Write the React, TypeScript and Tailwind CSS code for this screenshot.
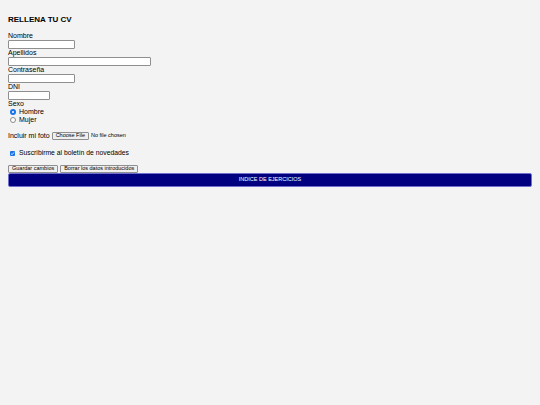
export default function App() {
  const inputCls =
    'block h-[9px] bg-white border border-[#8f8f8f] rounded-[1px] outline-none';
  const btnCls =
    'h-[8px] rounded-[1px] border border-[#8f8f8f] bg-[#efefef] px-[3px] text-[5.5px] leading-none';

  return (
    <div className="min-h-screen bg-[#f3f3f3] px-[8px] pt-[15px] font-['Liberation_Sans',Arial,sans-serif] text-black">
      <h1 className="text-[8px] leading-[10px] font-bold">RELLENA TU CV</h1>

      <form className="mt-[7px] text-[7px] leading-[8px]" onSubmit={(e) => e.preventDefault()}>
        <label className="block">Nombre</label>
        <input type="text" className={`${inputCls} w-[67px]`} />
        <label className="block">Apellidos</label>
        <input type="text" className={`${inputCls} w-[143px]`} />
        <label className="block">Contraseña</label>
        <input type="password" className={`${inputCls} w-[67px]`} />
        <label className="block">DNI</label>
        <input type="text" className={`${inputCls} w-[42px]`} />

        <div>Sexo</div>
        <div className="flex items-center gap-[3px] pl-[2px]">
          <span className="flex h-[6px] w-[6px] items-center justify-center rounded-full bg-[#1a73e8]">
            <span className="h-[2px] w-[2px] rounded-full bg-white" />
          </span>
          <span>Hombre</span>
        </div>
        <div className="flex items-center gap-[3px] pl-[2px]">
          <span className="h-[6px] w-[6px] rounded-full border border-[#8a8a8a] bg-white" />
          <span>Mujer</span>
        </div>

        <div className="mt-[7px] flex h-[9px] items-center">
          <span>Incluir mi foto</span>
          <span className="ml-[2px] flex h-[8px] items-center rounded-[1px] border border-[#8f8f8f] bg-[#efefef] px-[3px] text-[5.5px] leading-none">
            Choose File
          </span>
          <span className="ml-[2px] text-[5.5px] leading-none">No file chosen</span>
        </div>

        <div className="mt-[9px] flex h-[8px] items-center gap-[4px] pl-[2px]">
          <span className="flex h-[5px] w-[5px] items-center justify-center rounded-[1px] bg-[#1a73e8]">
            <svg viewBox="0 0 10 10" className="h-[5px] w-[5px]">
              <path d="M2 5.2 L4.2 7.3 L8 2.8" fill="none" stroke="white" strokeWidth="1.6" />
            </svg>
          </span>
          <span className="text-[6.8px]">Suscribirme al boletín de novedades</span>
        </div>

        <div className="mt-[8px] flex gap-[2px]">
          <button type="button" className={btnCls}>
            Guardar cambios
          </button>
          <button type="button" className={btnCls}>
            Borrar los datos introducidos
          </button>
        </div>

        <button
          type="button"
          className="flex h-[14px] w-full items-center justify-center rounded-[2px] border border-[#6f6fd0] bg-[#000080] text-[5.5px] leading-none text-white"
        >
          INDICE DE EJERCICIOS
        </button>
      </form>
    </div>
  );
}
